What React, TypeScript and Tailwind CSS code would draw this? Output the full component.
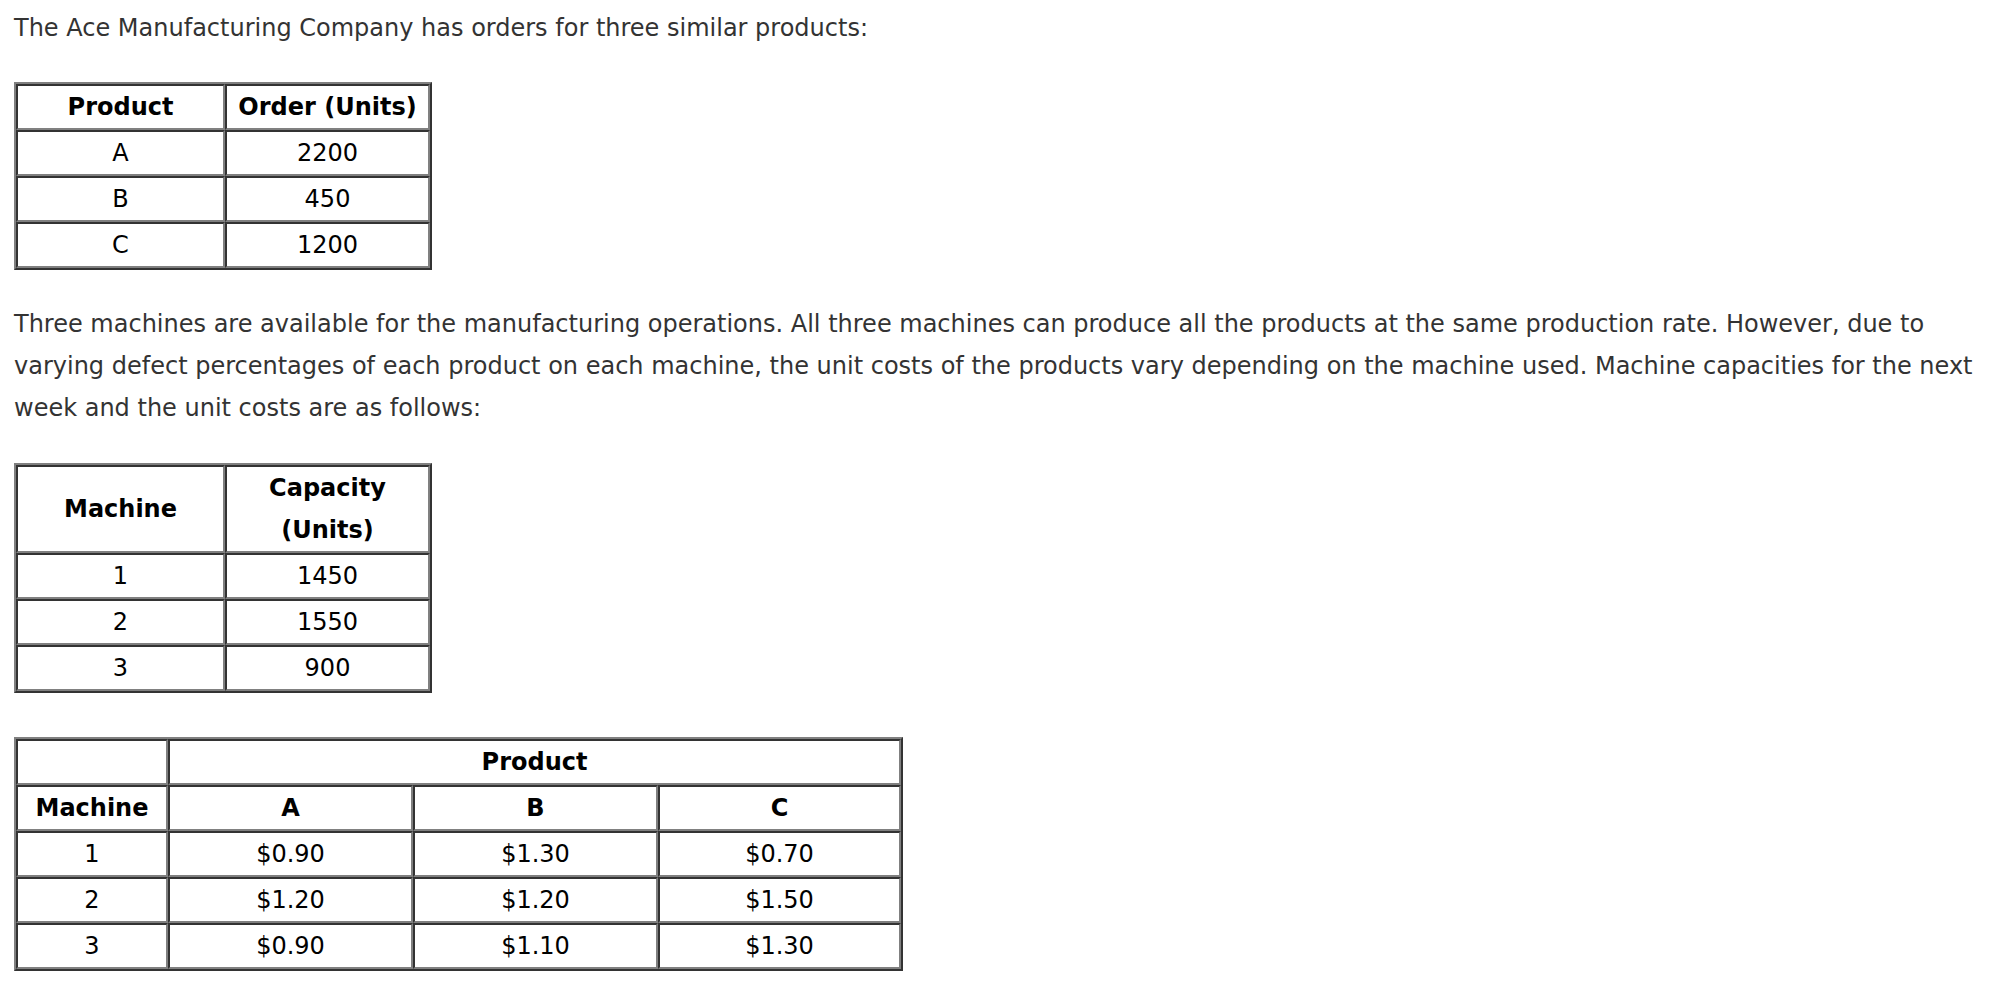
import React from "react";

const cell =
  "border-2 border-t-[#333333] border-l-[#333333] border-b-[#808080] border-r-[#808080] p-0 text-center align-middle leading-[42px]";
const tableCls =
  "border-separate border-spacing-0 border-2 border-t-[#808080] border-l-[#808080] border-b-[#333333] border-r-[#333333] text-black";

function Table1() {
  const rows: [string, string][] = [
    ["A", "2200"],
    ["B", "450"],
    ["C", "1200"],
  ];
  return (
    <table className={tableCls}>
      <tbody>
        <tr>
          <th className={`${cell} w-[209px] font-bold`}>Product</th>
          <th className={`${cell} w-[205px] font-bold`}>Order (Units)</th>
        </tr>
        {rows.map(([a, b]) => (
          <tr key={a}>
            <td className={`${cell} font-normal`}>{a}</td>
            <td className={`${cell} font-normal`}>{b}</td>
          </tr>
        ))}
      </tbody>
    </table>
  );
}

function Table2() {
  const rows: [string, string][] = [
    ["1", "1450"],
    ["2", "1550"],
    ["3", "900"],
  ];
  return (
    <table className={tableCls}>
      <tbody>
        <tr>
          <th className={`${cell} w-[209px] font-bold`}>Machine</th>
          <th className={`${cell} w-[205px] font-bold`}>
            Capacity
            <br />
            (Units)
          </th>
        </tr>
        {rows.map(([a, b]) => (
          <tr key={a}>
            <td className={`${cell} font-normal`}>{a}</td>
            <td className={`${cell} font-normal`}>{b}</td>
          </tr>
        ))}
      </tbody>
    </table>
  );
}

function Table3() {
  const rows: [string, string, string, string][] = [
    ["1", "$0.90", "$1.30", "$0.70"],
    ["2", "$1.20", "$1.20", "$1.50"],
    ["3", "$0.90", "$1.10", "$1.30"],
  ];
  return (
    <table className={tableCls}>
      <tbody>
        <tr>
          <td className={`${cell} w-[152px]`}></td>
          <th colSpan={3} className={`${cell} font-bold`}>
            Product
          </th>
        </tr>
        <tr>
          <th className={`${cell} font-bold`}>Machine</th>
          <th className={`${cell} w-[245px] font-bold`}>A</th>
          <th className={`${cell} w-[245px] font-bold`}>B</th>
          <th className={`${cell} w-[243px] font-bold`}>C</th>
        </tr>
        {rows.map((r) => (
          <tr key={r[0]}>
            {r.map((v, i) => (
              <td key={i} className={`${cell} font-normal`}>
                {v}
              </td>
            ))}
          </tr>
        ))}
      </tbody>
    </table>
  );
}

export default function App() {
  return (
    <div className="min-h-screen bg-white px-[14px] pt-[7px] text-[24px] leading-[42px] text-[#333333] [font-family:'DejaVu_Sans',Verdana,sans-serif]">
      <p className="whitespace-nowrap">The Ace Manufacturing Company has orders for three similar products:</p>
      <div className="mt-[33px]">
        <Table1 />
      </div>
      <p className="mt-[33px] whitespace-nowrap">
        Three machines are available for the manufacturing operations. All three machines can produce all the products at the same production rate. However, due to
        <br />
        varying defect percentages of each product on each machine, the unit costs of the products vary depending on the machine used. Machine capacities for the next
        <br />
        week and the unit costs are as follows:
      </p>
      <div className="mt-[34px]">
        <Table2 />
      </div>
      <div className="mt-[44px]">
        <Table3 />
      </div>
    </div>
  );
}
